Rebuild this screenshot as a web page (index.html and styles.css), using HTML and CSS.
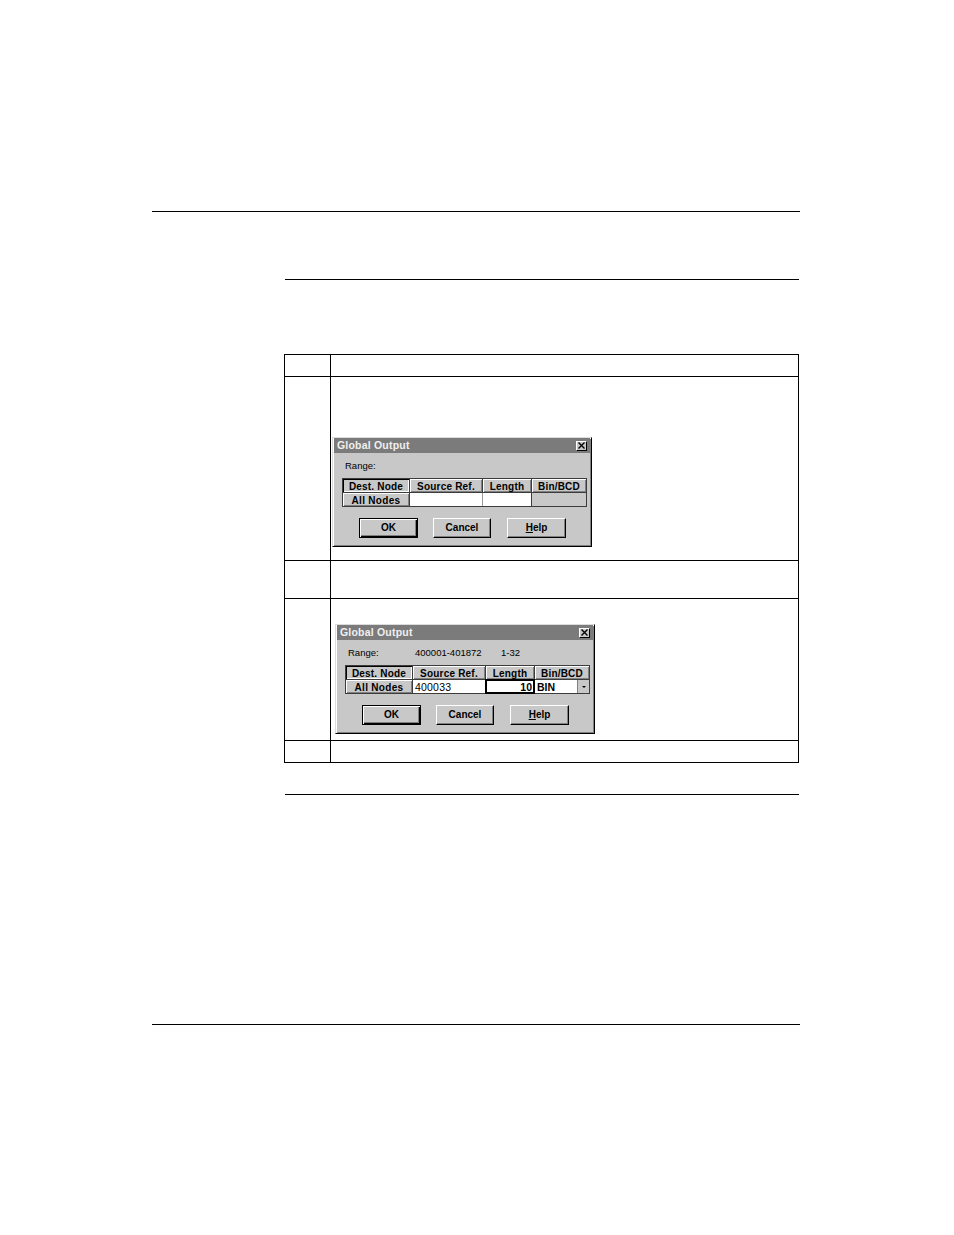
FILE: index.html
```html
<!DOCTYPE html>
<html>
<head>
<meta charset="utf-8">
<link rel="stylesheet" href="styles.css">
</head>
<body>
<div class="page">
  <div class="rule-wide"></div>
  <div class="section">
    <div class="rule-section"></div>
    <div class="steps">
      <div class="step h1"><div class="num"></div><div class="desc"></div></div>
      <div class="step h2">
        <div class="num"></div>
        <div class="desc">
          <div class="dialog d1">
            <div class="titlebar"><span class="title">Global Output</span>
              <span class="close"><svg width="7" height="7" viewBox="0 0 7 7"><path d="M0.5 0.5 L6.5 6.5 M6.5 0.5 L0.5 6.5" stroke="#000" stroke-width="1.4"/></svg></span>
            </div>
            <div class="body">
              <div class="range"><span class="rlabel">Range:</span></div>
              <div class="grid">
                <div class="hcell first">Dest. Node</div>
                <div class="hcell">Source Ref.</div>
                <div class="hcell">Length</div>
                <div class="hcell">Bin/BCD</div>
                <div class="hcell rowhead">All Nodes</div>
                <div class="cell white"></div>
                <div class="cell white light"></div>
                <div class="cell gray"></div>
              </div>
              <div class="buttons">
                <div class="btn default">OK</div>
                <div class="btn w58">Cancel</div>
                <div class="btn"><u>H</u>elp</div>
              </div>
            </div>
          </div>
        </div>
      </div>
      <div class="step h3"><div class="num"></div><div class="desc"></div></div>
      <div class="step h4">
        <div class="num"></div>
        <div class="desc">
          <div class="dialog d2">
            <div class="titlebar"><span class="title">Global Output</span>
              <span class="close"><svg width="7" height="7" viewBox="0 0 7 7"><path d="M0.5 0.5 L6.5 6.5 M6.5 0.5 L0.5 6.5" stroke="#000" stroke-width="1.4"/></svg></span>
            </div>
            <div class="body">
              <div class="range"><span class="rlabel">Range:</span><span class="rvalue">400001-401872</span><span class="rcount">1-32</span></div>
              <div class="grid">
                <div class="hcell first">Dest. Node</div>
                <div class="hcell">Source Ref.</div>
                <div class="hcell">Length</div>
                <div class="hcell">Bin/BCD</div>
                <div class="hcell rowhead">All Nodes</div>
                <div class="cell white text">400033</div>
                <div class="cell white focus">10</div>
                <div class="cell white combo"><span class="ctext">BIN</span><span class="drop"><span class="arrow"></span></span></div>
              </div>
              <div class="buttons">
                <div class="btn default">OK</div>
                <div class="btn w58">Cancel</div>
                <div class="btn"><u>H</u>elp</div>
              </div>
            </div>
          </div>
        </div>
      </div>
      <div class="step h5"><div class="num"></div><div class="desc"></div></div>
    </div>
    <div class="rule-section after"></div>
  </div>
  <div class="rule-wide bottom"></div>
</div>
</body>
</html>
```

FILE: styles.css
```css
html, body {
  margin: 0;
  padding: 0;
  background: #fff;
  font-family: "Liberation Sans", Arial, sans-serif;
  color: #000;
}

.page {
  padding-top: 211px;
  padding-bottom: 210px;
}

.rule-wide {
  margin-left: 152px;
  width: 648px;
  border-top: 1px solid #000;
}

.rule-wide.bottom {
  margin-top: 229px;
}

.section {
  margin-left: 284px;
  width: 515px;
}

.rule-section {
  margin-top: 67px;
  margin-left: 1px;
  width: 514px;
  border-top: 1px solid #000;
}

.rule-section.after {
  margin-top: 31px;
}

.steps {
  margin-top: 74px;
  border: 1px solid #000;
}

.step {
  display: grid;
  grid-template-columns: 46px 1fr;
}

.step + .step {
  border-top: 1px solid #000;
}

.num {
  border-right: 1px solid #000;
}

.h1 { height: 21px; }
.h2 { height: 183px; }
.h3 { height: 37px; }
.h4 { height: 141px; }
.h5 { height: 21px; }

/* dialogs */
.d1 { margin: 60px 0 0 1px; }
.d2 { margin: 25px 0 0 4px; }

.dialog {
  box-sizing: border-box;
  width: 260px;
  height: 110px;
  background: #c8c8c8;
  border: 1px solid;
  border-color: #dcdcdc #000 #000 #dcdcdc;
  box-shadow: inset 1px 1px #fff, inset -1px -1px #808080;
  padding: 0 1px 1px 1px;
}

.titlebar {
  height: 15px;
  background: #7b7b7b;
  display: flex;
  align-items: center;
  justify-content: space-between;
  padding: 0 3px 0 3px;
}

.title {
  color: #f0f0f0;
  font-weight: 700;
  font-size: 10.5px;
  line-height: 15px;
  letter-spacing: 0.2px;
}

.close {
  box-sizing: border-box;
  width: 11px;
  height: 10px;
  background: #c8c8c8;
  border: 1px solid;
  border-color: #fff #000 #000 #fff;
  display: flex;
  align-items: center;
  justify-content: center;
}

.close svg { display: block; }

.body {
  padding-left: 8px;
}

.range {
  display: flex;
  margin-top: 7px;
  margin-left: 3px;
  height: 11px;
  font-size: 9.5px;
  line-height: 12px;
}

.rlabel { width: 67px; }
.rvalue { width: 86px; }

.grid {
  margin-top: 7px;
  display: grid;
  grid-template-columns: 66px 72px 48px 54px;
  grid-template-rows: 13px 13px;
  gap: 1px;
  padding: 1px;
  background: #3c3c3c;
  width: max-content;
}

.hcell {
  background: #c8c8c8;
  box-shadow: inset 1px 1px #fff, inset -1px -1px #808080;
  font-size: 10px;
  font-weight: 700;
  text-align: center;
  line-height: 15px;
  white-space: nowrap;
  overflow: hidden;
  letter-spacing: 0.2px;
}

.hcell.first {
  box-shadow: inset 1px 1px #000, inset -1px -1px #fff;
}

.hcell.rowhead {
  letter-spacing: 0.3px;
}

.cell {
  font-size: 10.5px;
  line-height: 14px;
  white-space: nowrap;
  overflow: hidden;
}

.cell.white { background: #fff; }
.cell.gray { background: #c8c8c8; }
.cell.light { box-shadow: -1px 0 0 #9a9a9a; }

.cell.text {
  padding-left: 2px;
  letter-spacing: 0.2px;
}

.cell.focus {
  box-sizing: border-box;
  border: 1px solid #000;
  box-shadow: 0 0 0 1px #000;
  text-align: right;
  padding-right: 1px;
  line-height: 12px;
  font-weight: 700;
}

.cell.combo {
  display: flex;
  justify-content: space-between;
}

.ctext {
  padding-left: 2px;
  font-weight: 700;
}

.drop {
  box-sizing: border-box;
  width: 12px;
  height: 13px;
  background: #c8c8c8;
  border-left: 1px solid #808080;
  display: flex;
  align-items: center;
  justify-content: center;
}

.arrow {
  width: 0;
  height: 0;
  border-top: 2px solid #000;
  border-left: 2px solid transparent;
  border-right: 2px solid transparent;
}

.buttons {
  display: flex;
  gap: 15px;
  margin-top: 11px;
  margin-left: 17px;
}

.btn {
  box-sizing: border-box;
  width: 59px;
  height: 20px;
  background: #c8c8c8;
  border: 1px solid;
  border-color: #fff #000 #000 #fff;
  box-shadow: inset -1px -1px #808080;
  font-size: 10px;
  font-weight: 700;
  text-align: center;
  line-height: 18px;
}

.btn.w58 { width: 58px; margin-right: 1px; }

.btn.default {
  border: 1px solid #000;
  box-shadow: inset 1px 1px #fff, inset -1px -1px #000, inset -2px -2px #808080;
}
```
